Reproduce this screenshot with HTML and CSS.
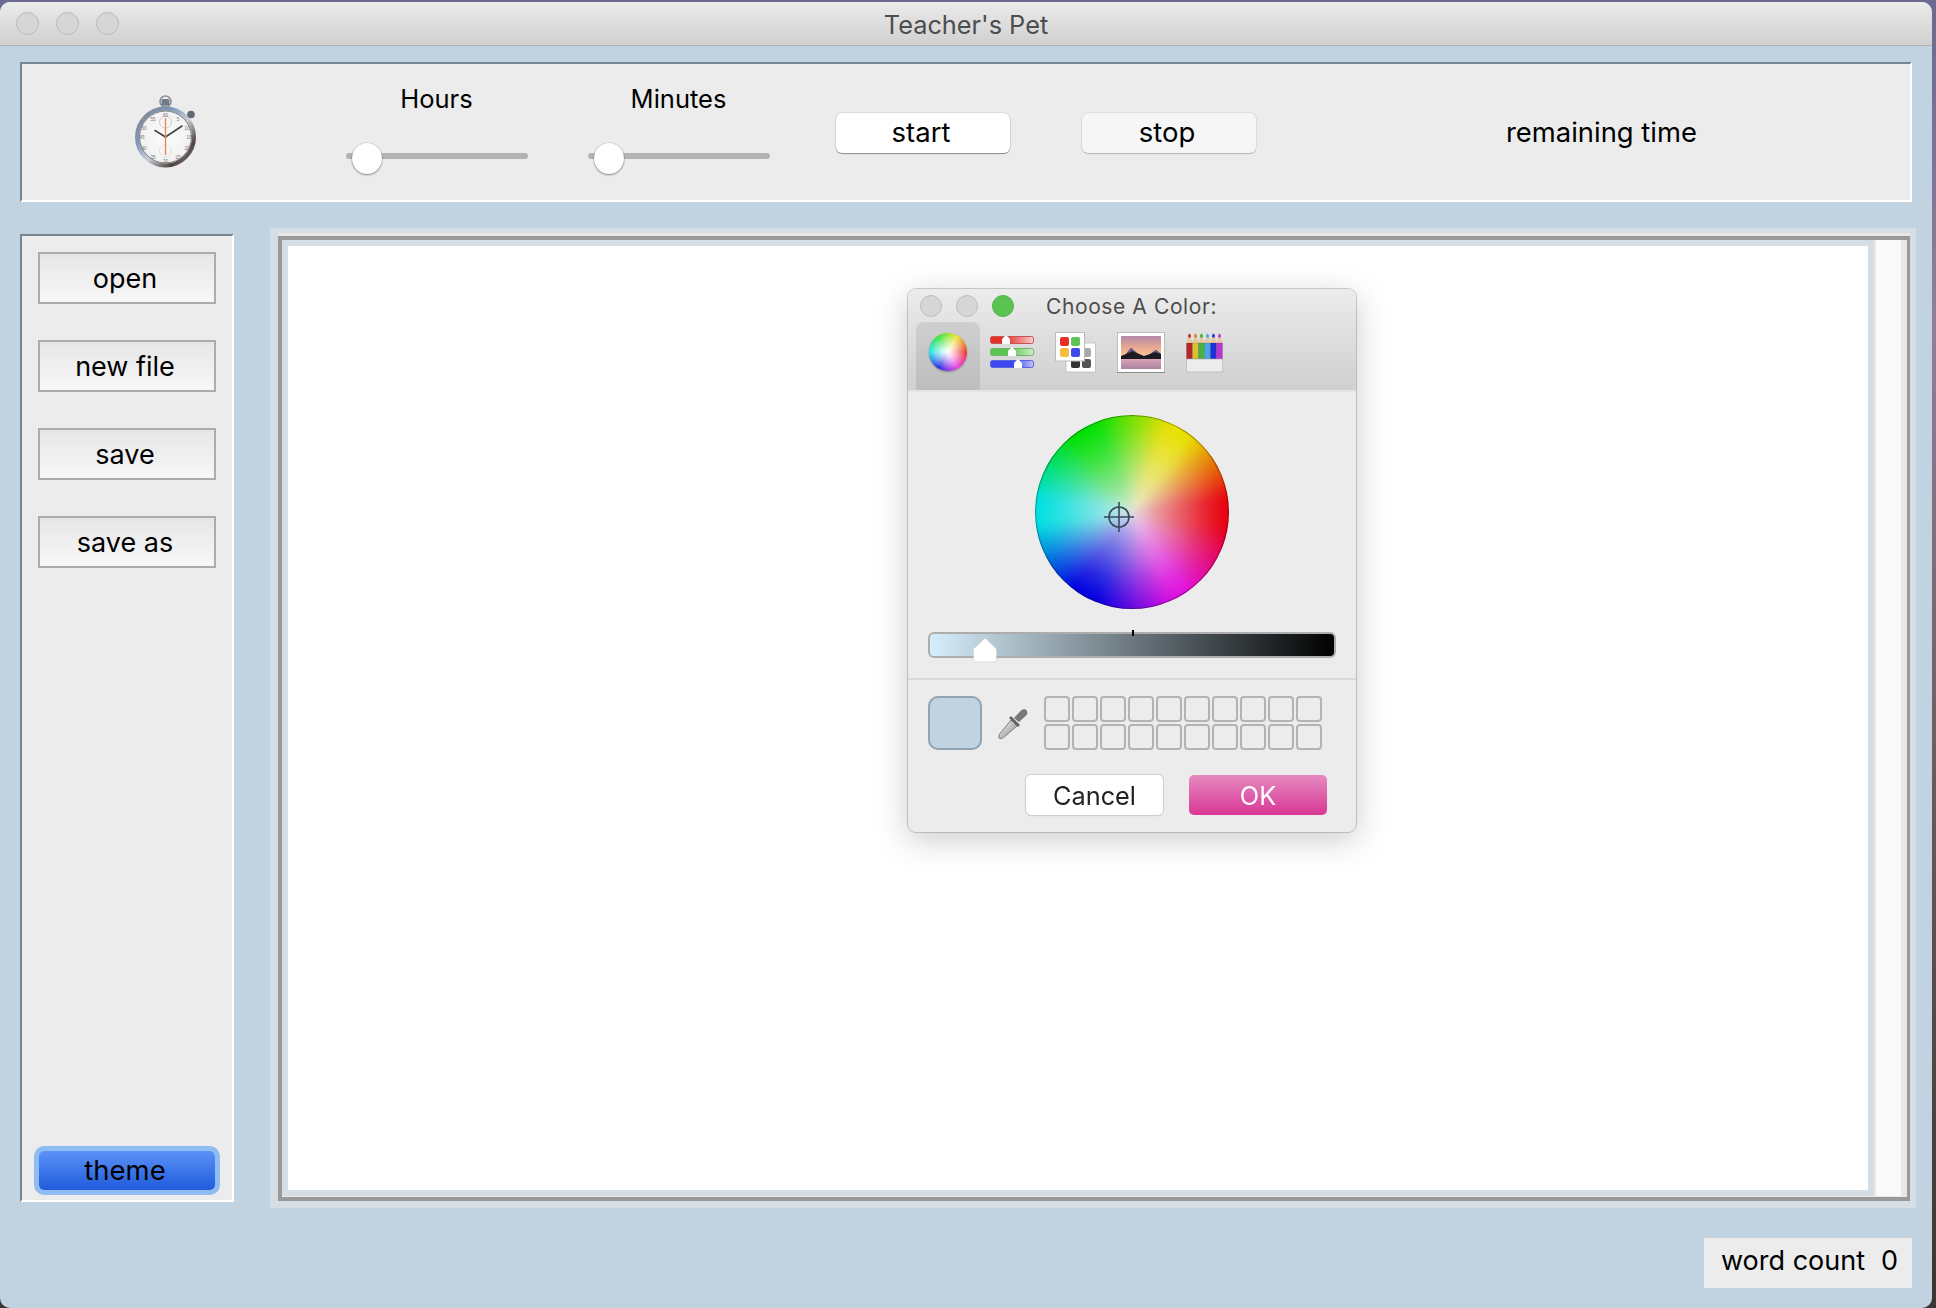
FILE: index.html
```html
<!DOCTYPE html>
<html lang="en">
<head>
<meta charset="utf-8">
<title>Teacher's Pet</title>
<link rel="stylesheet" href="styles.css">
</head>
<body>
<div class="window">
  <header class="titlebar">
    <div class="lights">
      <span class="light"></span><span class="light"></span><span class="light"></span>
    </div>
    <div class="title">Teacher's Pet</div>
  </header>

  <section class="toolbar groove">
    <svg class="stopwatch" width="70" height="74" viewBox="0 0 70 74">
      <defs>
        <linearGradient id="ring" x1="0" y1="0" x2="1" y2="1">
          <stop offset="0" stop-color="#85858a"/><stop offset=".3" stop-color="#7d97b8"/>
          <stop offset=".55" stop-color="#c9ced8"/><stop offset=".8" stop-color="#4f4340"/><stop offset="1" stop-color="#8f8a88"/>
        </linearGradient>
        <radialGradient id="dial"><stop offset="0" stop-color="#fbfbfb"/><stop offset=".85" stop-color="#f2f2f2"/><stop offset="1" stop-color="#d0d0d0"/></radialGradient>
      </defs>
      <circle cx="33.500" cy="6.500" r="5.500" fill="none" stroke="#8b9096" stroke-width="1.600"/>
      <rect x="29.500" y="4" width="8" height="8" rx="1.500" fill="#6f7c88"/>
      <rect x="30.500" y="10" width="6" height="4" fill="#9aa1a8"/>
      <path d="M52 25 57 21" stroke="#777" stroke-width="3"/>
      <circle cx="59" cy="19.500" r="3.800" fill="#5f6a75"/>
      <circle cx="33.500" cy="42" r="28.500" fill="url(#dial)" stroke="url(#ring)" stroke-width="4"/>
      <circle cx="33.500" cy="42" r="26" fill="none" stroke="#666" stroke-width=".8"/>
      <circle cx="33.500" cy="27" r="6" fill="none" stroke="#d0d0d0"/>
      <circle cx="33.500" cy="56" r="6" fill="none" stroke="#e2e2e2"/>
      <g class="dial-num">
        <text x="33.500" y="22">60</text><text x="46" y="26">5</text><text x="55" y="35">10</text><text x="57" y="44">15</text>
        <text x="55" y="55">20</text><text x="46" y="64">25</text><text x="33.500" y="68">30</text><text x="21" y="64">35</text>
        <text x="12" y="55">40</text><text x="10" y="44">45</text><text x="12" y="35">50</text><text x="21" y="26">55</text>
      </g>
      <path d="M33.500 42 23 35.500" stroke="#444" stroke-width="1.600" stroke-linecap="round"/>
      <path d="M33.500 42 50 31" stroke="#444" stroke-width="1.600" stroke-linecap="round"/>
      <path d="M33.500 23V60" stroke="#e8895a" stroke-width="1.400"/>
    </svg>

    <div class="timer">
      <div class="timer-label">Hours</div>
      <div class="slider"><span class="track"></span><span class="thumb"></span></div>
    </div>
    <div class="timer timer-second">
      <div class="timer-label">Minutes</div>
      <div class="slider"><span class="track"></span><span class="thumb"></span></div>
    </div>

    <button class="pill pill-start">start</button>
    <button class="pill pill-stop">stop</button>
    <div class="remaining">remaining time</div>
  </section>

  <div class="main">
    <aside class="sidebar groove">
      <button class="side-btn">open</button>
      <button class="side-btn">new file</button>
      <button class="side-btn">save</button>
      <button class="side-btn">save as</button>
      <button class="theme-btn">theme</button>
    </aside>
    <section class="editor">
      <div class="editor-frame">
        <div class="editor-inner">
          <div class="paper"></div>
          <div class="scrollbar"></div>
        </div>
      </div>
    </section>
  </div>

  <footer class="status">
    <div class="wordcount"><span>word count</span><span>0</span></div>
  </footer>

  <div class="dialog">
    <div class="dlg-head">
      <div class="dlg-title-row">
        <div class="dlg-lights">
          <span class="dlg-light"></span><span class="dlg-light"></span><span class="dlg-light dlg-green"></span>
        </div>
        <div class="dlg-title">Choose A Color:</div>
      </div>
      <div class="dlg-tabs">
        <div class="tab-selected"><span class="mini-wheel"></span></div>

        <svg class="tab-icon tab-sliders" width="44" height="41" viewBox="0 0 44 41">
          <defs>
            <linearGradient id="sr"><stop offset=".35" stop-color="#e5302a"/><stop offset="1" stop-color="#f5cfcf"/></linearGradient>
            <linearGradient id="sg"><stop offset=".45" stop-color="#5fc255"/><stop offset="1" stop-color="#cdeec8"/></linearGradient>
            <linearGradient id="sb"><stop offset=".55" stop-color="#3d49ee"/><stop offset="1" stop-color="#bcc1f6"/></linearGradient>
          </defs>
          <rect x=".5" y="4.500" width="43" height="7" rx="2" fill="url(#sr)" stroke="#c9534f"/>
          <rect x=".5" y="16.500" width="43" height="7" rx="2" fill="url(#sg)" stroke="#6cb765"/>
          <rect x=".5" y="28.500" width="43" height="7" rx="2" fill="url(#sb)" stroke="#5a64dd"/>
          <path class="s-thumb" d="M16 3 20 7V12H12V7Z"/>
          <path class="s-thumb" d="M22 15 26 19V24H18V19Z"/>
          <path class="s-thumb" d="M28 27 32 31V36H24V31Z"/>
        </svg>

        <svg class="tab-icon" width="41" height="41" viewBox="0 0 41 41">
          <rect x="11" y="11" width="29.500" height="29" fill="#fff" stroke="#bbb" stroke-width=".8"/>
          <rect x="27" y="16" width="9" height="9" rx="2" fill="#a9a9a9"/>
          <rect x="16" y="27" width="9" height="9" rx="2" fill="#333"/>
          <rect x="27" y="27" width="9" height="9" rx="2" fill="#555"/>
          <rect x=".5" y=".5" width="29" height="28.500" fill="#fff" stroke="#bbb"/>
          <rect x="5" y="5" width="9" height="9" rx="2" fill="#e8302a"/>
          <rect x="16" y="5" width="9" height="9" rx="2" fill="#5fc255"/>
          <rect x="5" y="16" width="9" height="9" rx="2" fill="#f7bc3b"/>
          <rect x="16" y="16" width="9" height="9" rx="2" fill="#3f49f0"/>
        </svg>

        <svg class="tab-icon" width="48" height="41" viewBox="0 0 48 41">
          <defs>
            <linearGradient id="sky" x1="0" y1="0" x2="0" y2="1">
              <stop offset="0" stop-color="#b58aa8"/><stop offset=".6" stop-color="#eeae8f"/><stop offset="1" stop-color="#f8d49c"/>
            </linearGradient>
            <linearGradient id="lake" x1="0" y1="0" x2="0" y2="1">
              <stop offset="0" stop-color="#d9a3b5"/><stop offset="1" stop-color="#a9829f"/>
            </linearGradient>
          </defs>
          <rect x=".5" y=".5" width="47" height="40" fill="#fff" stroke="#bdbdbd"/>
          <path d="M0 40.500H48" stroke="#8a8a8a"/>
          <rect x="4" y="4" width="40" height="23" fill="url(#sky)"/>
          <path d="M4 24 9 22 14 16 20 21 27 24 33 22 39 18 44 22V27H4Z" fill="#1d1a22"/>
          <path d="M9 22 14 16 20 21 15 19ZM33 22 39 18 44 22 38 20Z" fill="#6b5a99"/>
          <rect x="4" y="27" width="40" height="10" fill="url(#lake)"/>
        </svg>

        <svg class="tab-icon" width="38" height="41" viewBox="0 0 38 41">
          <path class="pencil-tip" fill="#c8201f" d="M2.200 6V3L3.500 1.500 4.800 3V6Z"/>
          <path class="pencil-tip" fill="#b98a1c" d="M8.200 6V3L9.500 1.500 10.800 3V6Z"/>
          <path class="pencil-tip" fill="#3ea82f" d="M14.200 6V3L15.500 1.500 16.800 3V6Z"/>
          <path class="pencil-tip" fill="#39a3e8" d="M20.200 6V3L21.500 1.500 22.800 3V6Z"/>
          <path class="pencil-tip" fill="#1a2fd8" d="M26.200 6V3L27.500 1.500 28.800 3V6Z"/>
          <path class="pencil-tip" fill="#b636cf" d="M32.200 6V3L33.500 1.500 34.800 3V6Z"/>
          <path class="pencil-wood" d="M.5 11 2.200 5.500H4.800L6.500 11ZM6.500 11 8.200 5.500H10.800L12.500 11ZM12.500 11 14.200 5.500H16.800L18.500 11ZM18.500 11 20.200 5.500H22.800L24.500 11ZM24.500 11 26.200 5.500H28.800L30.500 11ZM30.500 11 32.200 5.500H34.800L36.500 11Z"/>
          <rect class="pencil-body" x=".5" y="11" width="6" height="16" fill="#b3272a"/>
          <rect class="pencil-body" x="6.500" y="11" width="6" height="16" fill="#d9c22e"/>
          <rect class="pencil-body" x="12.500" y="11" width="6" height="16" fill="#4cb03f"/>
          <rect class="pencil-body" x="18.500" y="11" width="6" height="16" fill="#49a6e6"/>
          <rect class="pencil-body" x="24.500" y="11" width="6" height="16" fill="#1d31d6"/>
          <rect class="pencil-body" x="30.500" y="11" width="6" height="16" fill="#b636cf"/>
          <rect x=".3" y="27" width="36.500" height="13" fill="#ececec" stroke="#aaa" stroke-width=".6"/>
        </svg>
      </div>
    </div>
    <div class="dlg-line"></div>
    <div class="dlg-body">
      <div class="wheel-wrap">
        <div class="wheel"></div>
        <svg class="crosshair" width="32" height="32" viewBox="0 0 32 32">
          <circle cx="16" cy="16" r="10" fill="none" stroke="#36495a" stroke-width="1.600"/>
          <path d="M1 16H31M16 1V31" stroke="#36495a" stroke-width="1.600"/>
        </svg>
      </div>
      <div class="bright">
        <span class="bright-tick"></span>
        <svg class="bright-thumb" width="24" height="25" viewBox="0 0 24 25"><path d="M12 0 23.500 11V22Q23.500 24 21.500 24H2.500Q.5 24 .5 22V11Z" fill="#fff" stroke="#ccc" stroke-width=".6"/></svg>
      </div>
      <div class="dlg-divider"></div>
      <div class="swatch-row">
        <div class="swatch"></div>
        <svg class="dropper" width="32" height="34" viewBox="0 0 32 34">
          <defs><linearGradient id="glass" x1="0" y1="0" x2="1" y2="1"><stop offset="0" stop-color="#f5f5f5"/><stop offset="1" stop-color="#8c8c8c"/></linearGradient></defs>
          <path d="M2 32C1.500 31 2 29 3 27.500L14 14 20 20 6.500 31.500C5 32.500 3 33 2 32Z" fill="url(#glass)" stroke="#666" stroke-width=".8"/>
          <path d="M12 12 14 10 23 19 21 21Z" fill="#666"/>
          <path d="M17 12 24 4.500C26 2.800 29 3 30 5 31 7 30 9 28.500 10L22 16Z" fill="#777"/>
        </svg>
        <div class="wells">
          <i></i><i></i><i></i><i></i><i></i><i></i><i></i><i></i><i></i><i></i>
          <i></i><i></i><i></i><i></i><i></i><i></i><i></i><i></i><i></i><i></i>
        </div>
      </div>
      <div class="dlg-actions">
        <button class="dlg-btn dlg-cancel">Cancel</button>
        <button class="dlg-btn dlg-ok">OK</button>
      </div>
    </div>
  </div>
</div>
</body>
</html>
```

FILE: styles.css
```css
* { box-sizing: border-box; }
html, body { margin: 0; height: 1308px; overflow: hidden; }
body {
  padding: 2px 4px 0 0;
  background: linear-gradient(180deg, #6a6a90 0, #917f9a 25%, #6b5a5c 60%, #3c3432 100%);
  font-family: Inter, "Liberation Sans", sans-serif;
  color: #000;
}
button { font-family: inherit; color: inherit; padding: 0; cursor: default; }

.window {
  position: relative;
  width: 1932px;
  height: 1306px;
  background: #c1d3e1;
  border-radius: 10px;
  overflow: hidden;
  display: flex;
  flex-direction: column;
}

.titlebar {
  height: 44px;
  flex: none;
  display: grid;
  grid-template-columns: 1fr auto 1fr;
  align-items: center;
  background: linear-gradient(#ebebeb, #d0d0d0);
  border-bottom: 1px solid #b1b1b1;
}
.lights { display: flex; gap: 17px; padding-left: 16px; }
.light {
  width: 23px; height: 23px; border-radius: 50%;
  background: #d6d6d6; border: 1px solid #b8b8b8;
}
.title { font-size: 25.300px; color: #4d4d4d; padding-top: 2px; }

.groove {
  background: #ececec;
  border-style: solid;
  border-width: 2px;
  border-color: #75868f #fff #fff #75868f;
}

.toolbar {
  flex: none;
  height: 140px;
  margin: 16px 20px 0;
  display: flex;
  align-items: center;
}
.stopwatch { margin-left: 110px; flex: none; }
.dial-num text { font-size: 4.500px; fill: #777; text-anchor: middle; font-family: "Liberation Sans", sans-serif; }

.timer { width: 182px; flex: none; align-self: flex-start; margin-top: 20px; margin-left: 144px; }
.timer-second { margin-left: 60px; }
.timer-label { font-size: 25.500px; line-height: 30px; text-align: center; padding-right: 1px; }
.slider { position: relative; height: 30px; margin-top: 29px; }
.track {
  position: absolute; left: 0; right: 0; top: 10px; height: 6px;
  border-radius: 3px; background: #b3b3b3;
}
.thumb {
  position: absolute; left: 6px; top: 0; width: 30px; height: 31px;
  border-radius: 50%; background: #fff;
  box-shadow: 0 1px 2px rgba(0, 0, 0, .4), 0 0 0 .5px rgba(0, 0, 0, .15);
}

.pill {
  width: 174px; height: 40px; flex: none;
  margin-top: 2px;
  font-size: 27.500px;
  padding: 0 4px 2px 0;
  border: 0; border-radius: 6px;
  background: #fff;
  box-shadow: 0 1px 1px rgba(0, 0, 0, .35), 0 0 0 .5px rgba(0, 0, 0, .15);
}
.pill-start { margin-left: 66px; }
.pill-stop { margin-left: 72px; background: #f6f6f6; box-shadow: 0 1px 1px rgba(0, 0, 0, .2), 0 0 0 .5px rgba(0, 0, 0, .1); }
.remaining { margin-left: 250px; font-size: 27.400px; white-space: nowrap; }

.main {
  flex: none;
  height: 980px;
  margin: 26px 16px 0 20px;
  display: flex;
  gap: 36px;
}
.sidebar {
  width: 214px;
  height: 968px;
  margin-top: 6px;
  padding: 16px 16px 10px;
  display: flex;
  flex-direction: column;
  gap: 36px;
}
.side-btn {
  height: 52px; flex: none;
  font-size: 27px;
  border: 2px solid #acacac;
  background: linear-gradient(#e6e6e6, #f7f7f7);
  padding-right: 4px;
}
.theme-btn {
  width: 176px; height: 39px; flex: none;
  margin-top: auto;
  align-self: center;
  font-size: 27.500px;
  padding: 0 4px 2px 0;
  border: 0; border-radius: 5px;
  background: linear-gradient(#5b92f8, #1f5bdb);
  box-shadow: 0 0 0 5px #8fbcf3;
}

.editor {
  flex: 1;
  background: #d5dde5;
  padding: 8px 6px 7px 8px;
}
.editor-frame {
  height: 100%;
  border-style: solid;
  border-color: #999;
  border-width: 4px 3px 4px 4px;
  box-shadow: 0 -3px 0 #e8e8e8;
}
.editor-inner {
  height: 100%;
  display: flex;
  border-bottom: 1px solid #e8e8e8;
}
.paper { flex: 1; margin: 6px; background: #fff; }
.scrollbar {
  width: 33px; flex: none;
  background: #fafafa;
  border-left: 2px solid #e8e8e8;
  border-right: 6px solid #e8e8e8;
}

.status { margin-top: 30px; padding-right: 20px; display: flex; justify-content: flex-end; }
.wordcount {
  width: 208px; height: 50px;
  background: #ececec;
  display: flex; align-items: center; justify-content: space-between;
  padding: 0 14px 6px 17px;
  font-size: 27px;
}

.dialog {
  position: absolute;
  left: 908px; top: 287px;
  width: 448px; height: 543px;
  background: #ececec;
  border-radius: 8px;
  overflow: hidden;
  box-shadow: 0 0 0 1px rgba(0, 0, 0, .18);
  filter: drop-shadow(0 8px 16px rgba(0, 0, 0, .2));
}
.dlg-head { height: 101px; background: linear-gradient(#ececec, #cfcfcf); }
.dlg-title-row { height: 33px; padding: 1px 0 0 12px; display: flex; align-items: center; }
.dlg-lights { display: flex; gap: 14px; }
.dlg-light { width: 22px; height: 22px; border-radius: 50%; background: #d6d6d6; border: 1px solid #bcbcbc; }
.dlg-green { background: #5ac352; border-color: #52b44b; }
.dlg-title { margin-left: 32px; font-size: 21px; letter-spacing: .6px; color: #4d4d4d; white-space: nowrap; }
.dlg-tabs { height: 68px; padding-left: 8px; display: flex; gap: 21px; align-items: flex-start; }
.tab-selected {
  width: 64px; height: 68px; flex: none;
  border-radius: 8px 8px 0 0;
  background: linear-gradient(#cfcfcf, #bdbdbd);
  display: flex; justify-content: center; padding-top: 11px;
}
.mini-wheel {
  width: 38px; height: 38px; border-radius: 50%;
  background:
    radial-gradient(circle, #fff 0, rgba(255, 255, 255, .75) 25%, rgba(255, 255, 255, 0) 80%),
    conic-gradient(from 90deg, #e8100c, #e41ce0, #0000e0, #00e0e0, #10e010, #e8e010, #e8100c);
  box-shadow: 0 1px 2px rgba(0, 0, 0, .35);
}
.tab-icon { flex: none; margin-top: 10px; }
.tab-sliders { margin-left: -11px; }
.s-thumb { fill: #fff; }
.pencil-wood { fill: #e8c8a0; }
.pencil-body { stroke: rgba(0, 0, 0, .22); stroke-width: .5; }
.dlg-line { height: 2px; background: #e4e4e4; }

.wheel-wrap { position: relative; width: 194px; height: 194px; margin: 23px auto 0; }
.wheel {
  position: relative;
  width: 194px; height: 194px; border-radius: 50%;
  overflow: hidden;
}
.wheel::before {
  content: "";
  position: absolute;
  inset: -8px;
  filter: blur(5px);
  background:
    radial-gradient(circle closest-side, rgba(235, 235, 235, .94) 0, rgba(235, 235, 235, .66) 22%, rgba(235, 235, 235, .42) 45%, rgba(235, 235, 235, .18) 68%, rgba(235, 235, 235, 0) 90%),
    conic-gradient(from 90deg, #e8000c 0, #e8000c 8deg, #e010e0 56deg, #e010e0 64deg, #0000e0 112deg, #0000e0 128deg, #00e0e0 172deg, #00e0e0 188deg, #00e000 232deg, #00e000 248deg, #e8e000 292deg, #e8e000 308deg, #e8000c 352deg, #e8000c 360deg);
}
.wheel::after {
  content: "";
  position: absolute;
  inset: 0;
  border-radius: 50%;
  box-shadow: inset 0 0 1px 1px rgba(0, 0, 0, .38);
}
.crosshair { position: absolute; left: 68px; top: 86px; }

.bright {
  position: relative;
  width: 408px; height: 26px;
  margin: 23px 0 0 20px;
  border: 2px solid #adadad;
  border-radius: 6px;
  background: linear-gradient(90deg, #d6eefc, #000);
}
.bright-tick { position: absolute; left: 202px; top: -4px; width: 2px; height: 6px; background: #000; }
.bright-thumb { position: absolute; left: 43px; top: 4px; }

.dlg-divider { height: 2px; margin-top: 20px; background: #d8d8d8; }
.swatch-row { display: flex; align-items: flex-start; padding: 16px 0 0 20px; }
.swatch {
  width: 54px; height: 54px; flex: none;
  border-radius: 10px;
  border: 2px solid #8fa3b3;
  background: #c1d3e1;
}
.dropper { margin: 10px 0 0 15px; flex: none; }
.wells {
  margin-left: 15px;
  display: grid;
  grid-template-columns: repeat(10, 26px);
  grid-auto-rows: 26px;
  gap: 2px;
}
.wells i { display: block; border: 2px solid #b3b3b3; border-radius: 4px; }

.dlg-actions { display: flex; justify-content: flex-end; gap: 26px; padding: 25px 29px 0 0; }
.dlg-btn { height: 40px; font-size: 25.300px; padding-top: 1px; border: 0; border-radius: 5px; }
.dlg-cancel { width: 137px; background: #fff; color: #222; box-shadow: 0 0 0 1px #cfcfcf, 0 1px 1px rgba(0, 0, 0, .2); }
.dlg-ok { width: 138px; color: #fff; background: linear-gradient(#e58ac0, #d93795); }
```
